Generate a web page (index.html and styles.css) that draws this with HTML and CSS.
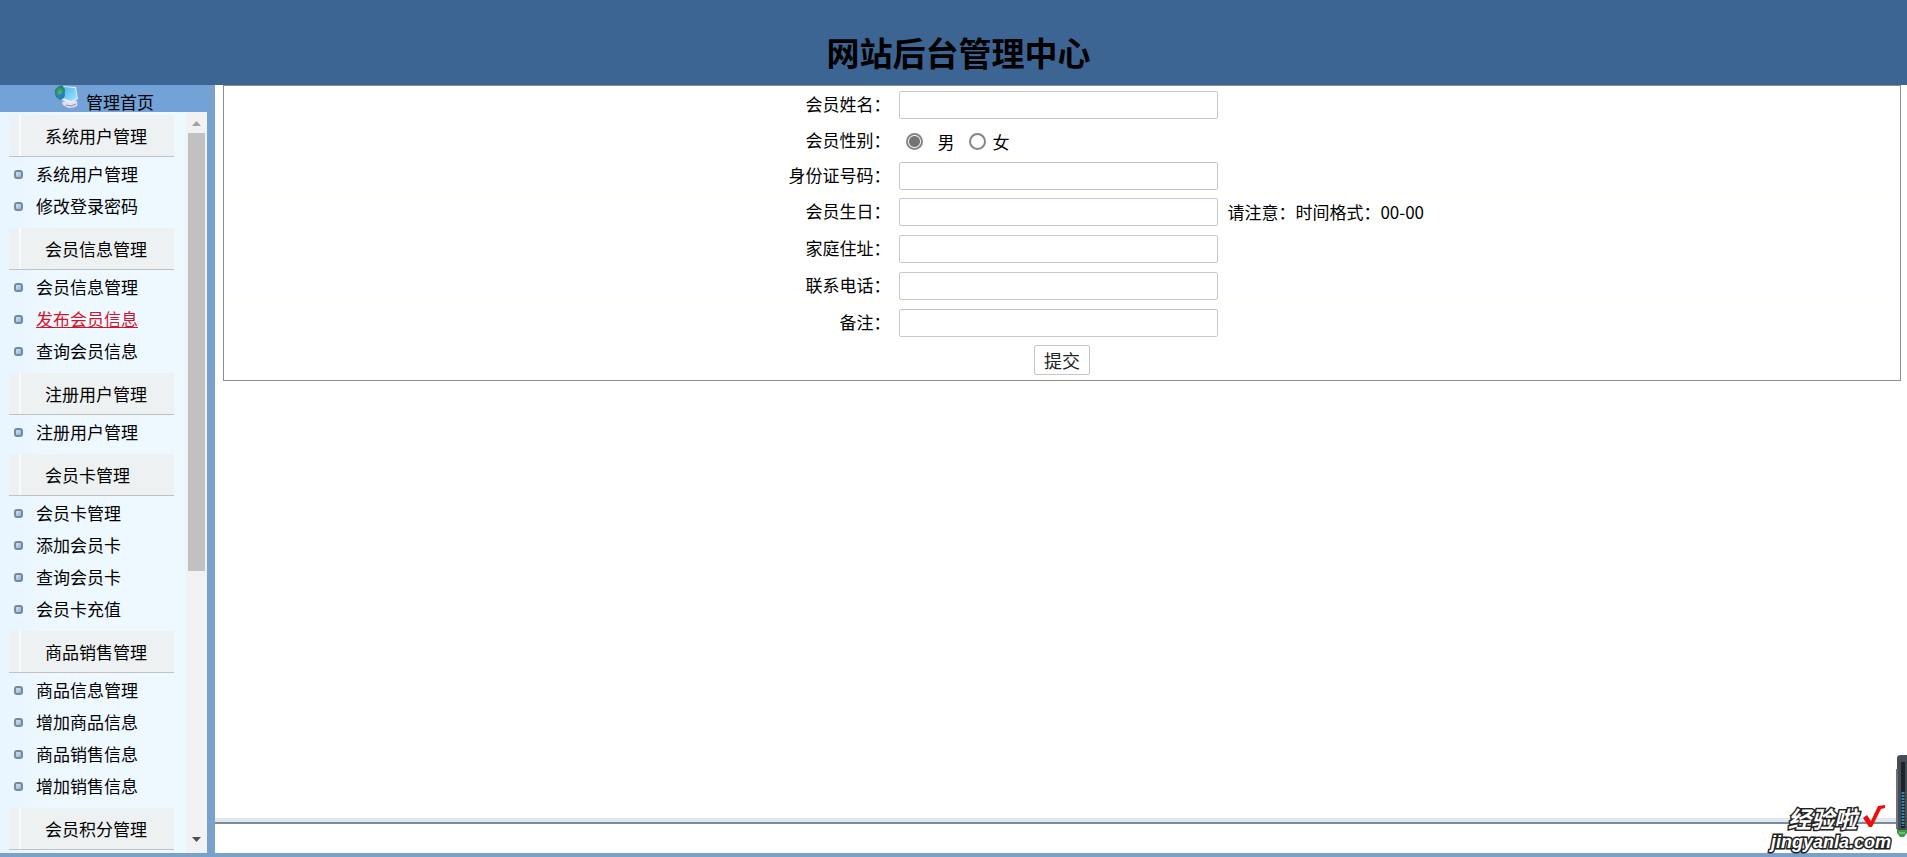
FILE: index.html
```html
<!DOCTYPE html>
<html lang="zh-CN">
<head>
<meta charset="utf-8">
<title>网站后台管理中心</title>
<link rel="stylesheet" href="styles.css">
</head>
<body>
<header class="banner"><h1>网站后台管理中心</h1></header>
<div class="frame">
  <aside class="sidebar">
    <a class="home" href="#">
      <svg class="home-icon" viewBox="0 0 24 24" aria-hidden="true">
        <defs>
          <linearGradient id="scr" x1="0" y1="0" x2="1" y2="1"><stop offset="0" stop-color="#4fb4ee"/><stop offset="1" stop-color="#a4e6ff"/></linearGradient>
          <radialGradient id="globe"><stop offset="0" stop-color="#58bd6a"/><stop offset="1" stop-color="#187b70"/></radialGradient>
        </defs>
        <ellipse cx="17" cy="19" rx="7" ry="4" fill="#b9b8dc"/>
        <path d="M8 17l7-2 8 1v5l-8 2-6-3z" fill="#e3dff2"/>
        <path d="M8 1l14 1 2 12-7 4-9-3z" fill="#e3effa"/>
        <path d="M10 2l11 1 2 10-6 3-8-3z" fill="url(#scr)"/>
        <path d="M1 5Q5-1 9 1l2 4-1 8-4 2Q0 12 1 5" fill="url(#globe)"/>
        <path d="M2 10q5 0 8-4l1 5q-4 6-9-1" fill="#287dc7"/>
        <path d="M12 20l5 1 5-2" stroke="#8986b2" fill="none"/>
      </svg>
      <span>管理首页</span>
    </a>
    <div class="menu-wrap">
      <nav class="menu">
        <section><h2>系统用户管理</h2><ul><li><a href="#">系统用户管理</a></li><li><a href="#">修改登录密码</a></li></ul></section>
        <section><h2>会员信息管理</h2><ul><li><a href="#">会员信息管理</a></li><li><a class="active" href="#">发布会员信息</a></li><li><a href="#">查询会员信息</a></li></ul></section>
        <section><h2>注册用户管理</h2><ul><li><a href="#">注册用户管理</a></li></ul></section>
        <section><h2>会员卡管理</h2><ul><li><a href="#">会员卡管理</a></li><li><a href="#">添加会员卡</a></li><li><a href="#">查询会员卡</a></li><li><a href="#">会员卡充值</a></li></ul></section>
        <section><h2>商品销售管理</h2><ul><li><a href="#">商品信息管理</a></li><li><a href="#">增加商品信息</a></li><li><a href="#">商品销售信息</a></li><li><a href="#">增加销售信息</a></li></ul></section>
        <section><h2>会员积分管理</h2></section>
      </nav>
      <div class="scrollbar" aria-hidden="true">
        <svg viewBox="0 0 17 21"><path d="M4 14h9l-4.500-5z" fill="#a3a3a3"/></svg>
        <div class="track"><div class="thumb"></div></div>
        <svg viewBox="0 0 17 21"><path d="M4 9h9l-4.500 5z" fill="#505050"/></svg>
      </div>
    </div>
  </aside>
  <main class="content">
    <form class="member-form">
      <table>
        <tr><th><label for="name">会员姓名：</label></th><td><input class="field" type="text" id="name"></td></tr>
        <tr class="short"><th>会员性别：</th><td><div class="radios"><input type="radio" name="sex" id="male" checked><label class="male" for="male">男</label><input type="radio" name="sex" id="female"><label for="female">女</label></div></td></tr>
        <tr class="short"><th><label for="idno">身份证号码：</label></th><td><input class="field" type="text" id="idno"></td></tr>
        <tr><th><label for="birth">会员生日：</label></th><td><input class="field" type="text" id="birth"><span class="hint">请注意：时间格式：00-00</span></td></tr>
        <tr><th><label for="addr">家庭住址：</label></th><td><input class="field" type="text" id="addr"></td></tr>
        <tr><th><label for="tel">联系电话：</label></th><td><input class="field" type="text" id="tel"></td></tr>
        <tr><th><label for="memo">备注：</label></th><td><input class="field" type="text" id="memo"></td></tr>
        <tr class="actions"><td colspan="2"><button type="submit">提交</button></td></tr>
      </table>
    </form>
    <div class="status"></div>
  </main>
</div>
<div class="watermark">
  <div class="mark-top"><span>经验啦</span><svg viewBox="0 0 24 24" aria-hidden="true"><path d="M1 14l4-3 4 6L16 2l7-1v3l-4 1-9 18H7z" fill="#f00c08"/></svg></div>
  <div class="mark-url">jingyanla.com</div>
</div>
<svg class="gadget" viewBox="0 0 11 82" aria-hidden="true">
  <path d="M1 3q0-3 4-3h6v76H1z" fill="#454c54"/>
  <path d="M0 14h2v60H0z" fill="#6b727a"/>
  <path d="M5 7h4v66H5z" fill="#1d232b"/>
  <path d="M7 37v34" stroke="#2b88ae" stroke-width="3" stroke-dasharray="2 1"/>
  <path d="M1 75h10v3l-3 4H4l-3-4z" fill="#3f9b46"/><path d="M3 78h6" stroke="#a6dfa4"/>
</svg>
</body>
</html>
```

FILE: styles.css
```css
*, *::before { box-sizing: border-box; }
body {
  margin: 0;
  height: 100vh;
  display: flex;
  flex-direction: column;
  overflow: hidden;
  background: #fff;
  color: #000;
  font: 400 17px/24px "Noto Sans CJK SC", sans-serif;
}
a { color: inherit; text-decoration: none; }
.banner {
  flex: none;
  padding: 28px 0 9px 10px;
  background: #3c6593;
  text-align: center;
}
.banner h1 { margin: 0; font-size: 33px; line-height: 48px; font-weight: 700; }
.frame { flex: 1; min-height: 0; display: flex; border-bottom: 4px solid #78a2cc; }
.sidebar {
  flex: none;
  width: 215px;
  display: flex;
  flex-direction: column;
  border-right: 8px solid #78a2cc;
  background: #eef8ff;
}
.home {
  flex: none;
  display: flex;
  gap: 8px;
  height: 27px;
  padding-left: 54px;
  background: #73a2d8;
}
.home-icon { width: 24px; height: 24px; }
.home span { line-height: 33px; }
.menu-wrap { flex: 1; min-height: 0; display: flex; justify-content: space-between; }
.menu {
  width: 174px;
  padding: 3px 0 0 9px;
  overflow: hidden;
  background: linear-gradient(90deg, #e8f5ff, #eef8ff 60px);
}
.menu section { padding-bottom: 7px; }
.menu h2 {
  margin: 0;
  padding-left: 36px;
  border-bottom: 1px solid #bfc1c3;
  background: linear-gradient(90deg, #edf1f3 10px, #f8fbfd 10px, #f8fbfd 12px, #eef1f2 12px);
  font-size: 17px;
  font-weight: 400;
  line-height: 41px;
}
.menu ul { margin: 0; padding: 0; list-style: none; }
.menu li { display: flex; align-items: center; gap: 13px; height: 32px; padding: 2px 0 0 5px; }
.menu li::before {
  content: "";
  width: 9px;
  height: 9px;
  border: 2px solid #78899d;
  border-radius: 3px;
  background: linear-gradient(135deg, #cfe5f7, #8fb4dc);
}
.menu .active { color: #d4142c; text-decoration: underline; }
.scrollbar { width: 21px; padding: 0 2px 4px; display: flex; flex-direction: column; background: #f1f2f3; }
.scrollbar svg { flex: none; width: 17px; height: 21px; }
.track { flex: 1; }
.thumb { height: 63%; background: #c1c1c1; }
.content { flex: 1; display: flex; flex-direction: column; justify-content: space-between; }
.member-form { margin: 0 6px 0 8px; }
.member-form table {
  width: 100%;
  table-layout: fixed;
  border: 1px solid #87938f;
  border-collapse: separate;
  border-spacing: 0;
}
.member-form tr { height: 37px; }
.member-form .short { height: 35px; }
.member-form .actions { height: 39px; }
th { width: 40%; padding: 0 4px 0 0; text-align: right; font-weight: 400; }
td { padding: 2px 0 0 5px; }
th, td { border-bottom: 1px solid #fffff0; }
.field {
  width: 319px;
  height: 28px;
  vertical-align: middle;
  border: 1px solid #c5c9ce;
  border-radius: 2px;
  background: #fff;
  font: inherit;
}
.hint { margin-left: 9px; vertical-align: middle; }
.radios { display: flex; align-items: center; padding-left: 7px; }
.radios input {
  appearance: none;
  width: 17px;
  height: 17px;
  margin: 0;
  border: 2px solid #858585;
  border-radius: 50%;
  background: #fff;
}
.radios input:checked { background: radial-gradient(circle, #757575 5px, #fff 6px); }
.radios label { padding: 2px 0 0 6px; }
.radios .male { padding: 2px 15px 0 14px; }
.actions td { padding: 0; text-align: center; }
button {
  width: 56px;
  height: 30px;
  padding: 0;
  vertical-align: middle;
  border: 1px solid #c6c6c6;
  border-radius: 2px;
  background: #fff;
  color: #222;
  font: 400 18px/26px "Noto Sans CJK SC", sans-serif;
}
.status { height: 35px; border-top: 4px solid #dfe8ef; }
.status::before { content: ""; display: block; height: 2px; background: #808a92; }
.watermark {
  position: absolute;
  right: 16px;
  bottom: 5px;
  color: #fff;
  font-weight: 700;
  -webkit-text-stroke: 3px #222;
  paint-order: stroke fill;
}
.mark-top { display: flex; justify-content: flex-end; gap: 5px; padding-right: 5px; font-size: 23px; line-height: 28px; font-style: italic; }
.mark-top svg { width: 24px; height: 24px; }
.mark-url { font: italic 700 18px/20px "Liberation Sans", sans-serif; }
.gadget { position: absolute; right: 0; bottom: 20px; width: 11px; height: 82px; }
```
